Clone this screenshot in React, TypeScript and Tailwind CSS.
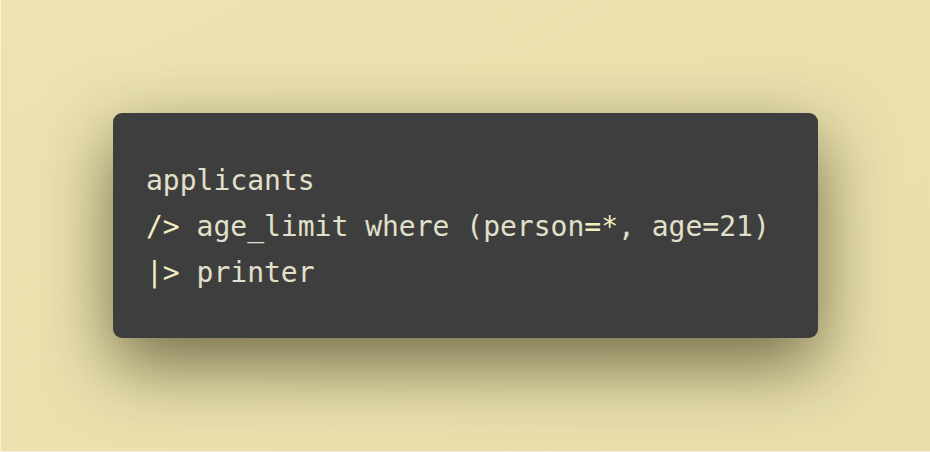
const lines = [
  [{ t: 'applicants' }],
  [{ t: '/>', hl: true }, { t: ' age_limit where (person' }, { t: '=*', hl: true }, { t: ', age=21)' }],
  [{ t: '|>', hl: true }, { t: ' printer' }],
];

export default function App() {
  return (
    <div className="flex h-[452px] w-[930px] items-center justify-center border-b border-l border-[#f6f1d6] bg-gradient-to-br from-[#ece3b0] to-[#e8dfab]">
      <div className="h-[225px] w-[705px] rounded-[9px] bg-[#3e3e3e] pl-[33px] pt-[45px] shadow-[0_26px_70px_rgba(40,35,10,0.62)]">
        <div className="whitespace-pre font-['DejaVu_Sans_Mono',monospace] text-[28px] leading-[46px] text-[#e2e0ca]">
          {lines.map((line, i) => (
            <div key={i} className="overflow-visible">
              {line.map((s, j) => (
                <span key={j} className={s.hl ? 'text-[#f4efc0]' : undefined}>
                  {s.t}
                </span>
              ))}
            </div>
          ))}
        </div>
      </div>
    </div>
  );
}
